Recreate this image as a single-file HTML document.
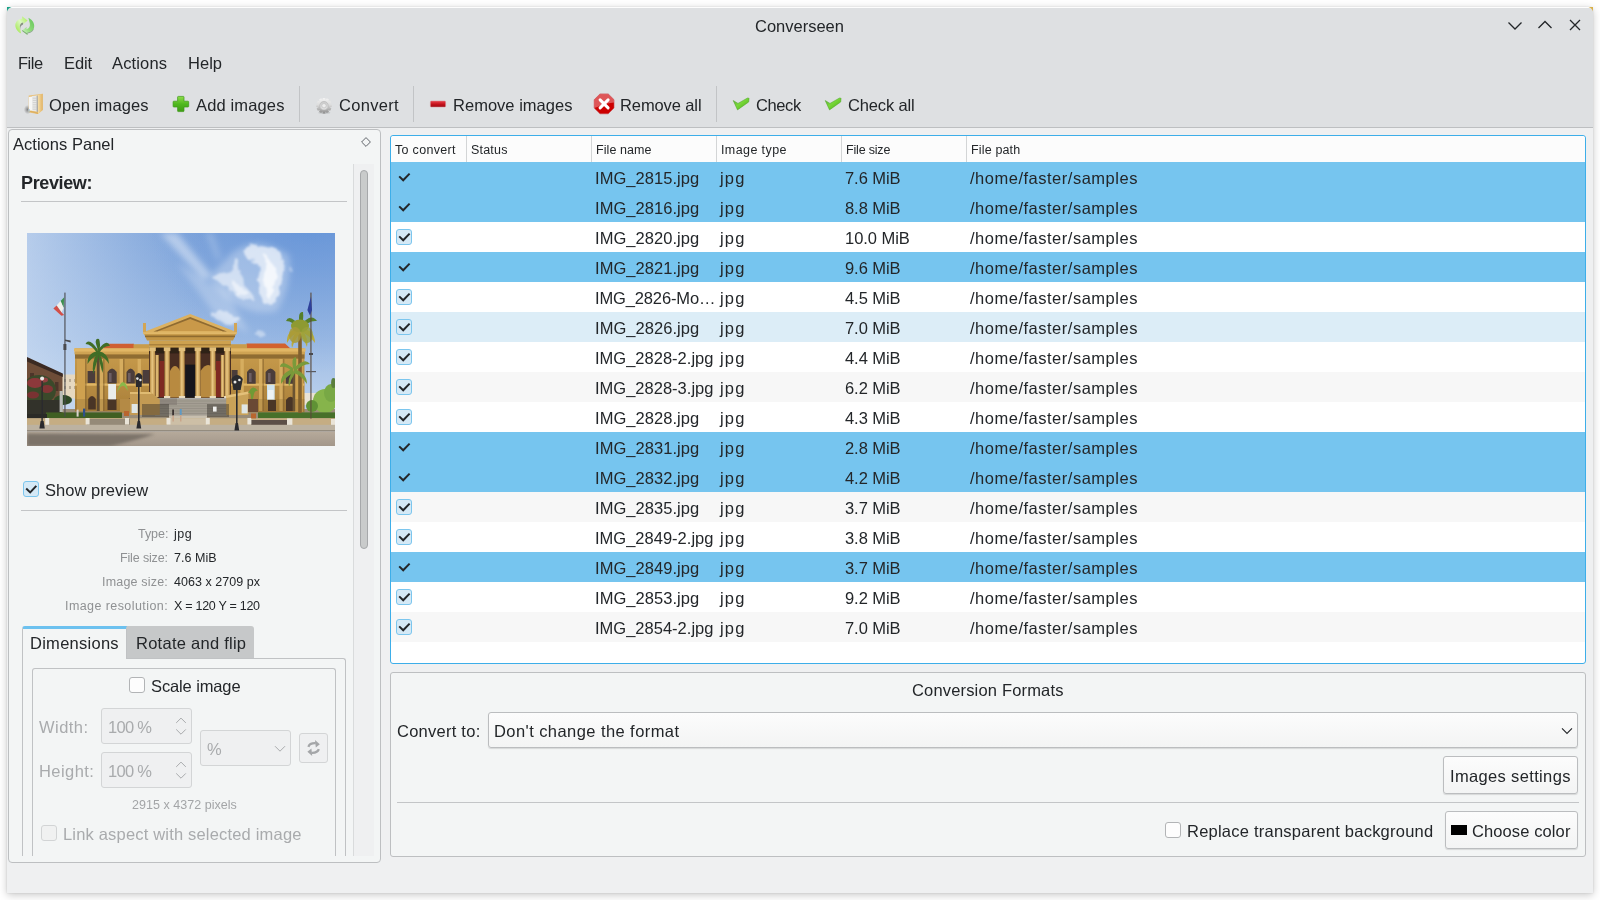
<!DOCTYPE html>
<html><head><meta charset="utf-8"><title>Converseen</title>
<style>
html,body{margin:0;padding:0;}
body{width:1600px;height:900px;overflow:hidden;background:#fff;position:relative;font-family:"Liberation Sans",sans-serif;}
.t{position:absolute;white-space:pre;will-change:transform;font-family:"Liberation Sans",sans-serif;}
#w{position:absolute;left:0;top:0;width:1600px;height:900px;}
svg{position:absolute;overflow:visible;}
.btn{box-sizing:border-box;border:1px solid #bbbdbf;border-radius:3px;background:linear-gradient(#fcfcfc,#f3f4f4);box-shadow:0 1px 1px rgba(0,0,0,0.12);}
.dis{box-sizing:border-box;border:1px solid #d3d5d6;border-radius:3px;background:#eff0f1;}
</style></head>
<body>
<div style="position:absolute;left:7px;top:7px;width:1586px;height:886px;background:#eff0f1;border-radius:4px 4px 0 0;box-shadow:0 2px 8px 0 rgba(0,0,0,0.22),0 0 2px rgba(0,0,0,0.12);"></div>
<div style="position:absolute;left:7px;top:7px;width:1586px;height:120px;background:#dee0e2;border-radius:4px 4px 0 0;border-top:1px solid #fdfdfd;box-sizing:border-box;"></div>
<div style="position:absolute;left:7px;top:127px;width:1586px;height:1px;background:#bdbfc1;"></div>
<svg style="left:7px;top:7px" width="5" height="5"><path d="M0 0H4.5Q1 1 0 4.5Z" fill="#16a085"/></svg>
<svg style="left:1588px;top:7px" width="5" height="5"><path d="M5 0H0.5Q4 1 5 4.5Z" fill="#d8b04a"/></svg>
<span class="t" style="left:755px;top:16px;font-size:16.5px;line-height:21px;color:#232629;">Converseen</span>
<svg style="left:1500px;top:12px" width="90" height="28" fill="none" stroke="#232629" stroke-width="1.3"><path d="M8.5 10.5L15 17L21.5 10.5"/><path d="M38.5 16L45 9.5L51.5 16"/><path d="M70 8L80 18M80 8L70 18"/></svg>
<span class="t" style="left:18px;top:53px;font-size:16.5px;line-height:21px;color:#232629;letter-spacing:-0.454px;">File</span>
<span class="t" style="left:64px;top:53px;font-size:16.5px;line-height:21px;color:#232629;letter-spacing:-0.079px;">Edit</span>
<span class="t" style="left:112px;top:53px;font-size:16.5px;line-height:21px;color:#232629;letter-spacing:0.146px;">Actions</span>
<span class="t" style="left:188px;top:53px;font-size:16.5px;line-height:21px;color:#232629;letter-spacing:0.021px;">Help</span>
<span class="t" style="left:49px;top:95px;font-size:16.5px;line-height:21px;color:#232629;letter-spacing:0.147px;">Open images</span>
<span class="t" style="left:196px;top:95px;font-size:16.5px;line-height:21px;color:#232629;letter-spacing:0.142px;">Add images</span>
<span class="t" style="left:339px;top:95px;font-size:16.5px;line-height:21px;color:#232629;letter-spacing:0.308px;">Convert</span>
<span class="t" style="left:453px;top:95px;font-size:16.5px;line-height:21px;color:#232629;letter-spacing:0.018px;">Remove images</span>
<span class="t" style="left:620px;top:95px;font-size:16.5px;line-height:21px;color:#232629;letter-spacing:-0.107px;">Remove all</span>
<span class="t" style="left:756px;top:95px;font-size:16.5px;line-height:21px;color:#232629;letter-spacing:-0.403px;">Check</span>
<span class="t" style="left:848px;top:95px;font-size:16.5px;line-height:21px;color:#232629;letter-spacing:-0.134px;">Check all</span>
<div style="position:absolute;left:299px;top:86px;width:1px;height:36px;background:#c2c4c6;"></div>
<div style="position:absolute;left:413px;top:86px;width:1px;height:36px;background:#c2c4c6;"></div>
<div style="position:absolute;left:716px;top:86px;width:1px;height:36px;background:#c2c4c6;"></div>
<svg style="left:14px;top:15px" width="22" height="22" viewBox="0 0 22 22">
<defs><linearGradient id="ag1" x1="1" y1="0" x2="0" y2="1"><stop offset="0" stop-color="#a5ea4a"/><stop offset="0.45" stop-color="#dcf8c4"/><stop offset="1" stop-color="#98e43a"/></linearGradient>
<linearGradient id="ag2" x1="1" y1="0" x2="0" y2="1"><stop offset="0" stop-color="#62c25a"/><stop offset="0.55" stop-color="#8fdc78"/><stop offset="1" stop-color="#e2f8d8"/></linearGradient>
<filter id="ab" x="-10%" y="-10%" width="120%" height="120%"><feGaussianBlur stdDeviation="0.3"/></filter></defs>
<g filter="url(#ab)">
<path d="M8 1.2L13.6 5.6L9 9.6L9.2 7.4C6.6 7.8 5.4 10 6 13.2L7.2 18.6C2.6 16 0.6 12 1.6 8.4C2.4 5.6 5 3.8 8.2 3.8Z" fill="url(#ag1)"/>
<path d="M9.2 7.4C6.6 7.8 5.4 10 6 13.2L6.6 15.8Q5.2 11 9 9.6Z" fill="#5f6f58" opacity="0.7"/>
<path d="M13.4 20L7.8 15.8L12.6 12L12.4 14.2C15.2 13.8 16.4 11.4 15.8 8.2L14.4 2.8C19 5.2 21 9.2 20 12.8C19.2 15.6 16.6 17.4 13.4 17.4Z" fill="url(#ag2)"/>
<path d="M13.4 20L7.8 15.8L8.6 15.2L13.2 18.4L13.4 17.4Q18.6 17 20 12.8Q19.6 17.4 13.6 18.4Z" fill="#4f7f4a" opacity="0.6"/>
</g>
</svg>
<svg style="left:24px;top:93px" width="20" height="22" viewBox="0 0 20 22">
<defs><linearGradient id="fg1" x1="0" y1="0" x2="1" y2="0"><stop offset="0" stop-color="#f7e0aa"/><stop offset="1" stop-color="#e1b263"/></linearGradient>
<radialGradient id="fsh" cx="0.5" cy="0.5" r="0.5"><stop offset="0" stop-color="#6f6f6f" stop-opacity="0.85"/><stop offset="1" stop-color="#7a7a7a" stop-opacity="0"/></radialGradient>
<filter id="fb" x="-10%" y="-10%" width="120%" height="120%"><feGaussianBlur stdDeviation="0.35"/></filter></defs>
<ellipse cx="3.6" cy="16.6" rx="3.8" ry="4.6" fill="url(#fsh)"/>
<g filter="url(#fb)">
<path d="M4.7 2.6L18.6 0.7L18.7 17L14 20.9L4.7 19.6Z" fill="#e9c27c"/>
<path d="M4.9 4L8.6 3.4V17.6L4.9 18Z" fill="#f6f6f5"/>
<path d="M8 3L13.4 2.4V18.6L8 18Z" fill="#e9e9e8"/>
<path d="M8.8 5.2H12.4M8.8 7.4H12.4M8.8 9.6H12.4M8.8 11.8H12.4M8.8 14H12.4M8.8 16.2H12.4" stroke="#c9c9c8" stroke-width="0.8"/>
<path d="M12.6 3L14 2.6V19L12.6 18.6Z" fill="#a9a9a8"/>
<path d="M13.8 2.3L18.7 0.8L18.7 17.1L14 20.9Z" fill="url(#fg1)"/>
<path d="M4.6 18.4L14 20.9L14 19.6L5.2 17.6Z" fill="#ddb060"/>
<path d="M4.6 16L5.6 16L5.6 19.6L4.6 19.4Z" fill="#9ec0dc"/>
</g>
</svg>
<svg style="left:172px;top:95px" width="18" height="18" viewBox="0 0 18 18">
<defs><linearGradient id="pg" x1="0" y1="0" x2="0" y2="1"><stop offset="0" stop-color="#8fdd4a"/><stop offset="0.5" stop-color="#4fb81e"/><stop offset="1" stop-color="#3f9d16"/></linearGradient></defs>
<path d="M6.3 1.4H11.3Q12 1.4 12 2.1V6.2H16Q16.7 6.2 16.7 6.9V11.3Q16.7 12 16 12H12V15.9Q12 16.6 11.3 16.6H6.3Q5.6 16.6 5.6 15.9V12H1.8Q1.1 12 1.1 11.3V6.9Q1.1 6.2 1.8 6.2H5.6V2.1Q5.6 1.4 6.3 1.4Z" fill="url(#pg)" stroke="#3c9a17" stroke-width="0.7"/>
</svg>
<svg style="left:315px;top:97px" width="18" height="18" viewBox="0 0 18 18">
<defs><linearGradient id="gg" gradientUnits="userSpaceOnUse" x1="0" y1="0.8" x2="0" y2="16.6"><stop offset="0" stop-color="#f4f4f4"/><stop offset="0.45" stop-color="#dcdcdc"/><stop offset="1" stop-color="#8a8a8a"/></linearGradient>
<linearGradient id="gg2" x1="0" y1="0" x2="0" y2="1"><stop offset="0" stop-color="#c9c9c9"/><stop offset="1" stop-color="#e4e4e4"/></linearGradient>
<filter id="gb" x="-10%" y="-10%" width="120%" height="120%"><feGaussianBlur stdDeviation="0.35"/></filter></defs>
<ellipse cx="9.3" cy="15.8" rx="6" ry="1.1" fill="#a9abad" opacity="0.5"/>
<g filter="url(#gb)">
<path d="M7.46 2.90L7.74 0.90L10.26 0.90L10.54 2.90L10.56 2.91L11.81 1.32L13.99 2.58L13.23 4.45L13.25 4.47L15.12 3.71L16.38 5.89L14.79 7.14L14.80 7.16L16.80 7.44L16.80 9.96L14.80 10.24L14.79 10.26L16.38 11.51L15.12 13.69L13.25 12.93L13.23 12.95L13.99 14.82L11.81 16.08L10.56 14.49L10.54 14.50L10.26 16.50L7.74 16.50L7.46 14.50L7.44 14.49L6.19 16.08L4.01 14.82L4.77 12.95L4.75 12.93L2.88 13.69L1.62 11.51L3.21 10.26L3.20 10.24L1.20 9.96L1.20 7.44L3.20 7.16L3.21 7.14L1.62 5.89L2.88 3.71L4.75 4.47L4.77 4.45L4.01 2.58L6.19 1.32L7.44 2.91Z" fill="url(#gg)"/>
<circle cx="9" cy="8.7" r="6.1" fill="url(#gg)"/>
<circle cx="9" cy="8.7" r="4.3" fill="url(#gg2)" stroke="#b4b4b4" stroke-width="0.6"/>
<circle cx="9" cy="8.7" r="2.2" fill="#ededed" stroke="#bcbcbc" stroke-width="0.6"/>
</g>
</svg>
<svg style="left:429px;top:99px" width="18" height="10" viewBox="0 0 18 10">
<defs><linearGradient id="mg" x1="0" y1="0" x2="0" y2="1"><stop offset="0" stop-color="#e8404a"/><stop offset="0.55" stop-color="#c4111b"/><stop offset="1" stop-color="#9c0d15"/></linearGradient></defs>
<rect x="1.4" y="2" width="15.2" height="6" rx="0.9" fill="url(#mg)" stroke="#d98a8e" stroke-width="0.5"/>
</svg>
<svg style="left:593px;top:93px" width="22" height="22" viewBox="0 0 22 22">
<path d="M7 0.9H15.2L21 6.7V15L15.2 20.8H7L1.2 15V6.7Z" fill="#cc0000" stroke="#c8434a" stroke-width="0.6" stroke-linejoin="round"/>
<path d="M7 0.9H15.2L21 6.7V9.4Q14 10 8 12.6Q4 14.2 1.2 15V6.7Z" fill="#e98a8e" opacity="0.62"/>
<path d="M7.1 6.9L15.1 14.9M15.1 6.9L7.1 14.9" stroke="#fff" stroke-width="3" stroke-linecap="round"/>
</svg>
<svg style="left:732px;top:97px" width="18" height="14" viewBox="0 0 18 14">
<defs><linearGradient id="cg1" x1="0" y1="0" x2="1" y2="1"><stop offset="0" stop-color="#5aa83a"/><stop offset="0.45" stop-color="#78d838"/><stop offset="1" stop-color="#4aa818"/></linearGradient></defs>
<path d="M1.2 3.5L6 6.4L15.5 1L17.1 1.3L16.7 5L5.5 12.9Z" fill="url(#cg1)" stroke="#4aa524" stroke-width="0.5" stroke-linejoin="round"/>
</svg>
<svg style="left:824px;top:97px" width="18" height="14" viewBox="0 0 18 14">
<defs><linearGradient id="cg2" x1="0" y1="0" x2="1" y2="1"><stop offset="0" stop-color="#5aa83a"/><stop offset="0.45" stop-color="#78d838"/><stop offset="1" stop-color="#4aa818"/></linearGradient></defs>
<path d="M1.2 3.5L6 6.4L15.5 1L17.1 1.3L16.7 5L5.5 12.9Z" fill="url(#cg2)" stroke="#4aa524" stroke-width="0.5" stroke-linejoin="round"/>
</svg>
<div style="position:absolute;left:8px;top:129px;width:373px;height:734px;box-sizing:border-box;border:1px solid #bdbfc1;border-radius:4px;background:#f3f5f5;"></div>
<span class="t" style="left:13px;top:134px;font-size:16.5px;line-height:21px;color:#232629;letter-spacing:0.027px;">Actions Panel</span>
<svg style="left:360px;top:136px" width="12" height="12"><path d="M6 1.6L10.4 6L6 10.4L1.6 6Z" fill="none" stroke="#60646a" stroke-width="1"/></svg>
<div style="position:absolute;left:353px;top:164px;width:21px;height:692px;background:#eff0f1;border-left:1px solid #d9dbdc;box-sizing:border-box;"></div>
<div style="position:absolute;left:360px;top:170px;width:8px;height:379px;box-sizing:border-box;background:#c9cbcb;border:1px solid #a6a8aa;border-radius:4px;"></div>
<span class="t" style="left:21px;top:172px;font-size:18px;line-height:22px;color:#232629;letter-spacing:-0.380px;font-weight:bold;">Preview:</span>
<div style="position:absolute;left:21px;top:201px;width:326px;height:1px;background:#c3c5c7;"></div>
<svg style="left:27px;top:233px" width="308" height="213" viewBox="0 0 308 213">
<defs>
<clipPath id="pc"><rect x="0" y="0" width="308" height="213"/></clipPath>
<linearGradient id="sky" x1="0" y1="0" x2="0" y2="1"><stop offset="0" stop-color="#7aa1d9"/><stop offset="0.5" stop-color="#9dbbe4"/><stop offset="0.8" stop-color="#bad0ec"/><stop offset="1" stop-color="#c6d9ef"/></linearGradient>
<linearGradient id="skyl" x1="0" y1="0" x2="1" y2="0.12"><stop offset="0" stop-color="#dbe7f6" stop-opacity="0.62"/><stop offset="0.3" stop-color="#cfdff3" stop-opacity="0.3"/><stop offset="0.6" stop-color="#b0c8ea" stop-opacity="0"/></linearGradient>
<radialGradient id="skyr" gradientUnits="userSpaceOnUse" cx="285" cy="-25" r="165"><stop offset="0" stop-color="#5c8fd8" stop-opacity="0.7"/><stop offset="0.6" stop-color="#6a98da" stop-opacity="0.28"/><stop offset="1" stop-color="#6a98da" stop-opacity="0"/></radialGradient>
<linearGradient id="och" x1="0" y1="0" x2="0" y2="1"><stop offset="0" stop-color="#c99d4c"/><stop offset="1" stop-color="#a97f3a"/></linearGradient>
<linearGradient id="col" x1="0" y1="0" x2="1" y2="0"><stop offset="0" stop-color="#b58a42"/><stop offset="0.45" stop-color="#e9c783"/><stop offset="1" stop-color="#b98d45"/></linearGradient>
<linearGradient id="road" x1="0" y1="0" x2="0" y2="1"><stop offset="0" stop-color="#b6aa9b"/><stop offset="1" stop-color="#a3978a"/></linearGradient>
<filter id="cw" x="-30%" y="-30%" width="160%" height="160%"><feTurbulence type="fractalNoise" baseFrequency="0.07" numOctaves="3" seed="7" result="n"/><feDisplacementMap in="SourceGraphic" in2="n" scale="11" xChannelSelector="R" yChannelSelector="G"/><feGaussianBlur stdDeviation="1.2"/></filter>
<filter id="b1" x="-20%" y="-20%" width="140%" height="140%"><feGaussianBlur stdDeviation="1.6"/></filter>
<filter id="b2" x="-20%" y="-20%" width="140%" height="140%"><feGaussianBlur stdDeviation="3.2"/></filter>
<filter id="b03" x="-2%" y="-2%" width="104%" height="104%"><feGaussianBlur stdDeviation="0.38"/></filter>
<filter id="b05" x="-20%" y="-20%" width="140%" height="140%"><feGaussianBlur stdDeviation="0.6"/></filter>
</defs>
<g clip-path="url(#pc)"><g filter="url(#b03)">
<rect width="308" height="213" fill="url(#sky)"/>
<rect width="308" height="213" fill="url(#skyl)"/>
<rect width="308" height="213" fill="url(#skyr)"/>
<!-- clouds -->
<g filter="url(#b2)" fill="#fff">
<path d="M133 0L150 0L186 44L176 46Z" opacity="0.42"/>
<path d="M178 0L186 0L194 26L190 27Z" opacity="0.2"/>
<path d="M150 30L200 60L222 100L190 84Z" opacity="0.25"/>
<path d="M205 20Q230 0 262 22Q266 50 250 78Q225 84 200 66Q180 50 186 40Z" opacity="0.28"/>
</g>
<g filter="url(#cw)" fill="#fff">
<path d="M214 17Q222 10 236 12Q250 16 257 28Q256 46 251 60Q245 74 238 72Q233 60 232 48Q230 32 225 24Q218 22 214 17Z" opacity="0.62"/>
<path d="M236 22Q247 28 250 44Q248 58 242 66Q237 50 236 22Z" opacity="0.7"/>
<path d="M207 27Q212 26 213 34Q214 46 221 56Q229 62 226 68Q216 72 207 62Q197 50 186 46Q190 38 198 40Q204 42 207 27Z" opacity="0.5"/>
<path d="M206 44Q214 52 222 62Q214 68 206 58Q202 50 206 44Z" opacity="0.5"/>
<path d="M184 80Q196 77 212 84Q214 90 200 90Q186 89 184 80Z" opacity="0.5"/>
<path d="M228 100Q236 96 240 102Q236 106 228 100Z" opacity="0.4"/>
<path d="M262 34Q266 32 268 37Q264 40 262 34Z" opacity="0.3"/>
</g>
<rect x="0" y="176" width="308" height="12" fill="#9a8d78"/>
<!-- far buildings left -->
<rect x="34" y="141.5" width="20" height="24" fill="#e6d8bf"/>
<g fill="#b9ab94"><rect x="37" y="146" width="2" height="3"/><rect x="42" y="146" width="2" height="3"/><rect x="47" y="146" width="2" height="3"/><rect x="37" y="153" width="2" height="3"/><rect x="42" y="153" width="2" height="3"/><rect x="47" y="153" width="2" height="3"/></g>
<!-- far buildings right -->
<rect x="276" y="160" width="22" height="12" fill="#e9e2d4"/>
<!-- left dark building -->
<path d="M0 125L35.5 141L35.5 180L0 180Z" fill="#6e4e38"/>
<path d="M0 124L35.8 140.5L35.8 144L0 128.5Z" fill="#3b2b24"/>
<g fill="#4d3629"><rect x="3" y="140" width="4" height="9"/><rect x="11" y="143" width="4" height="9"/><rect x="20" y="146" width="4" height="9"/><rect x="28" y="149" width="3.5" height="9"/></g>
<!-- red bush -->
<g filter="url(#b05)">
<ellipse cx="12" cy="157" rx="17" ry="15" fill="#3b4a2c"/>
<g opacity="0.75"><ellipse cx="8" cy="150" rx="8" ry="5" fill="#a8333f"/><ellipse cx="20" cy="156" rx="6" ry="4" fill="#9a2f3a"/><ellipse cx="6" cy="162" rx="6" ry="3.4" fill="#8e2c36"/><ellipse cx="17" cy="147" rx="4" ry="2.4" fill="#b03c48"/></g>
<ellipse cx="36" cy="167" rx="9" ry="5" fill="#2f4a28"/>
</g>
<rect x="0" y="167" width="34" height="14" fill="#33302a"/>
<!-- right trees -->
<g filter="url(#b05)">
<ellipse cx="298" cy="168" rx="12" ry="12" fill="#86b44c"/><ellipse cx="304" cy="160" rx="7" ry="9" fill="#78a844"/><ellipse cx="285" cy="173" rx="6" ry="6" fill="#5f9236"/><ellipse cx="306.5" cy="150" rx="2.4" ry="5" fill="#5a7f3c"/>
</g>
<!-- ===== building ===== -->
<!-- wing roofs -->
<path d="M79 110.8L107 110.8L107 116L76 116Z" fill="#cf5f30"/>
<path d="M219.5 110.4L258 110.4L264 116L219.5 116Z" fill="#d2622f"/>
<!-- wings -->
<rect x="48" y="115.3" width="75" height="63" fill="url(#och)"/>
<rect x="204" y="115.3" width="73.5" height="64" fill="url(#och)"/>
<rect x="106.5" y="111.2" width="16" height="6" fill="#c99c4b"/><rect x="204" y="111.2" width="16" height="6" fill="#c99c4b"/>
<!-- cornice bands -->
<rect x="47" y="115.3" width="76.5" height="3.4" fill="#e2b765"/><rect x="204" y="115.3" width="74.5" height="3.4" fill="#e2b765"/>
<rect x="48" y="121" width="75" height="4.6" fill="#8f6c30"/><rect x="204" y="121" width="73.5" height="4.6" fill="#8f6c30"/>
<rect x="47.5" y="119" width="76" height="2.4" fill="#cfa352"/><rect x="204" y="119" width="74" height="2.4" fill="#cfa352"/>
<rect x="48" y="150.5" width="75" height="2.2" fill="#e0b766"/><rect x="204" y="150.5" width="73.5" height="2.2" fill="#e0b766"/>
<!-- end pavilions (slightly projecting) -->
<rect x="50" y="126" width="8" height="52" fill="#cfa150"/><rect x="268" y="126" width="8" height="53" fill="#cfa150"/>
<g fill="#d9b062" opacity="0.9"><rect x="72.6" y="126" width="3.4" height="52"/><rect x="92.6" y="126" width="3.4" height="25"/><rect x="110.6" y="126" width="3.4" height="38"/><rect x="213.4" y="126" width="3.4" height="34"/><rect x="232" y="126" width="3.4" height="52"/><rect x="252.4" y="126" width="3.4" height="52"/></g>
<g fill="#7d5c2c" opacity="0.5"><rect x="76" y="126" width="1.6" height="52"/><rect x="96" y="126" width="1.6" height="25"/><rect x="235.4" y="126" width="1.6" height="52"/><rect x="255.8" y="126" width="1.6" height="52"/><rect x="58" y="126" width="1.6" height="52"/></g>
<rect x="48" y="166" width="75" height="12.6" fill="#8a672f" opacity="0.28"/><rect x="204" y="166" width="73.5" height="13" fill="#8a672f" opacity="0.28"/>
<!-- upper windows -->
<g fill="#4b3d3a">
<path d="M80.5 150.5V139Q85 132 89.7 139V150.5Z"/><path d="M99.5 150.5V139Q103.7 132 107.8 139V150.5Z"/>
<rect x="60.6" y="138" width="7.6" height="12"/><rect x="115.6" y="137" width="7" height="13.5"/>
<path d="M220 150.8V139Q224.3 132 228.7 139V150.8Z"/><path d="M238.6 151V139Q243.5 132 248.4 139V151Z"/>
<rect x="204.6" y="137" width="6" height="13.5"/><path d="M258.8 150.8V141Q263 135.5 267.2 141V150.8Z"/>
</g>
<g fill="#8a7a86" opacity="0.55"><rect x="82" y="140" width="2.6" height="9"/><rect x="101" y="140" width="2.6" height="9"/><rect x="222" y="140" width="2.6" height="9"/><rect x="241" y="140" width="2.6" height="9"/></g>
<!-- lower doors / banners -->
<g fill="#4a3425">
<path d="M61.2 176.5V166Q65 160 68.8 166V176.5Z"/><path d="M99.6 176.5V168Q102.5 163 105.4 168V176.5Z"/>
<path d="M259 178V167Q263.5 160.5 268 167V178Z"/><path d="M222 177V166H231V177Z"/><path d="M241 178V167H249V178Z"/>
<rect x="80.5" y="166" width="9" height="11"/>
</g>
<rect x="81.2" y="151" width="7.8" height="15.4" fill="#e9ecea"/><rect x="240" y="151.5" width="7.7" height="15.2" fill="#cfe3ee"/><rect x="241" y="157" width="5.6" height="9" fill="#eef3f4"/>
<!-- portico: interior -->
<rect x="122" y="114" width="82" height="51" fill="#4a2f22"/>
<rect x="132.6" y="128" width="4.6" height="36" fill="#7e2a22"/><rect x="189" y="128" width="4.6" height="36" fill="#7e2a22"/>
<path d="M143 164.5V138Q148 128 153 138V164.5Z" fill="#b88a3f"/><path d="M173.5 164.5V138Q181 126 189 138V164.5Z" fill="#b88a3f"/>
<rect x="158.2" y="131.6" width="10.8" height="33" fill="#17181b"/>
<rect x="122" y="114" width="82" height="6.5" fill="#2f2018"/>
<!-- entablature -->
<rect x="122.2" y="107.4" width="81.8" height="7.2" fill="#cda14f"/>
<rect x="122.2" y="111.2" width="81.8" height="1.2" fill="#a47a38"/>
<path d="M116.4 99.4H209.6L206 107.6H120Z" fill="#c29545"/>
<rect x="116.2" y="99" width="93.6" height="2.2" fill="#e1b869"/>
<rect x="118" y="102.6" width="90" height="1.6" fill="#8e6a2e"/>
<!-- pediment -->
<path d="M163.2 81L210 99.2H116.2Z" fill="#dcb160"/>
<path d="M163.2 85.6L196 98H130.4Z" fill="#c9994a"/>
<path d="M163.2 84L200 98.4L196 98.4L163.2 86L130.4 98.4L126.4 98.4Z" fill="#8e6a30"/>
<rect x="116" y="90" width="3" height="9" fill="#d2a556"/><rect x="207" y="90" width="3" height="9" fill="#d2a556"/>
<!-- columns -->
<g fill="url(#col)">
<rect x="122.9" y="118" width="5.2" height="46"/><rect x="137.5" y="118" width="5.2" height="46"/><rect x="152.4" y="118" width="5.2" height="46"/><rect x="168.3" y="118" width="5.2" height="46"/><rect x="183.2" y="118" width="5.2" height="46"/><rect x="197.6" y="118" width="5.2" height="46"/>
<rect x="128.4" y="122" width="3.4" height="42"/><rect x="193.8" y="122" width="3.4" height="42"/>
</g>
<g fill="#e2bf7a">
<rect x="122.2" y="114.3" width="6.6" height="3.8"/><rect x="136.8" y="114.3" width="6.6" height="3.8"/><rect x="151.7" y="114.3" width="6.6" height="3.8"/><rect x="167.6" y="114.3" width="6.6" height="3.8"/><rect x="182.5" y="114.3" width="6.6" height="3.8"/><rect x="196.9" y="114.3" width="6.6" height="3.8"/>
</g>
<g fill="#e9dcc0">
<rect x="122.4" y="163" width="6.2" height="2.2"/><rect x="137" y="163" width="6.2" height="2.2"/><rect x="151.9" y="163" width="6.2" height="2.2"/><rect x="167.8" y="163" width="6.2" height="2.2"/><rect x="182.7" y="163" width="6.2" height="2.2"/><rect x="197.1" y="163" width="6.2" height="2.2"/>
</g>
<!-- stairs and side walls -->
<path d="M128 165.3H200V183H128Z" fill="#a49e93"/>
<g stroke="#8b857b" stroke-width="0.5"><path d="M128 168H200M128 170.5H200M128 173H200M128 175.5H200M128 178H200M128 180.5H200"/></g>
<path d="M128 165.3L150 165.3L150 172L128 172Z" fill="#7d776f" opacity="0.55"/>
<path d="M103 159H123.2L132.8 166.3V182H103Z" fill="#c39a52"/><path d="M103 159H123.2L125 161H103Z" fill="#e0bb72"/>
<path d="M199.2 162.4L221.4 158.6V182H199.2Z" fill="#c9a258"/><path d="M199.2 162.4L221.4 158.6V161L199.2 165Z" fill="#e3c07a"/>
<rect x="93" y="166" width="10" height="14" fill="#b48a45"/>
<rect x="221" y="166" width="10" height="13" fill="#6a4a35"/>
<!-- hedge, wall, sidewalk, road -->
<rect x="19" y="179.4" width="76" height="5.6" fill="#3f5e24"/><rect x="231" y="179.4" width="77" height="5.8" fill="#47702a"/>
<rect x="0" y="181" width="20" height="4.4" fill="#2b2a25"/>
<g fill="#2f2a25" opacity="0.42"><rect x="115" y="171" width="27" height="13"/><rect x="180" y="171" width="22" height="13"/></g>
<rect x="142" y="182.6" width="38" height="3" fill="#c8bfae"/>
<rect x="0" y="185.2" width="308" height="6.8" fill="#c5ad83"/>
<rect x="60" y="186" width="43" height="6" fill="#958a78"/><rect x="224" y="187" width="38" height="5" fill="#5c5046"/>
<rect x="140" y="185.2" width="40" height="6.8" fill="#cdbfa6"/>
<g fill="#e9e4d8"><rect x="18.2" y="185" width="4" height="7"/><rect x="58.6" y="185" width="4" height="6.6"/><rect x="98" y="185" width="4" height="6.6"/><rect x="139.5" y="185" width="4" height="6.6"/><rect x="178.8" y="185" width="4" height="6.6"/><rect x="220.4" y="185" width="4" height="6.6"/><rect x="260" y="185.4" width="5.4" height="6.8"/><rect x="304" y="186" width="4" height="7"/></g>
<rect x="0" y="191.8" width="308" height="6.6" fill="#bcb2a1"/>
<rect x="0" y="197.4" width="308" height="1" fill="#7a7268"/>
<rect x="0" y="198.4" width="308" height="14.6" fill="url(#road)"/>
<path d="M0 200.4L128 201Q112 206.5 84 213H0Z" fill="#6f675f" opacity="0.8" filter="url(#b1)"/>
<!-- left palm -->
<rect x="69.8" y="118" width="2.8" height="60" fill="#5c4a30"/>
<g fill="#3f6d28" filter="url(#b05)">
<path d="M71 117Q62 104 58.5 111Q64 111 70 120Z"/><path d="M71 117Q66 104 72 106Q74 110 72 120Z"/><path d="M71 117Q80 105 83 113Q77 112 72 120Z"/><path d="M71 118Q60 120 60.5 131Q65 124 71 122Z"/><path d="M71 118Q82 120 82 131Q78 124 71 122Z"/><path d="M70 120Q64 130 66.5 141Q69 131 72 122Z"/><path d="M72 120Q78 130 75.5 140Q73 131 71 122Z"/>
</g>
<path d="M90 160Q92 150 96 149Q100 150 101 158Q97 152 95.5 153Q93 153 90 160Z" fill="#8ab84a"/>
<!-- right palms -->
<rect x="271.2" y="100" width="3.6" height="80" fill="#80602f"/>
<rect x="265.6" y="140" width="2.6" height="38" fill="#6a5230"/>
<g filter="url(#b05)">
<g fill="#557f2b"><path d="M273 93Q262 80 259 88Q266 88 272 97Z"/><path d="M273 93Q284 79 290 88Q281 87 274 97Z"/><path d="M273 93Q270 78 276 79Q277 86 274 96Z"/></g>
<g fill="#b9aa3c"><path d="M272 95Q259 97 260 110Q265 101 272 99Z"/><path d="M274 95Q288 97 288 110Q281 101 274 99Z"/><path d="M271 97Q263 106 265 115Q268 106 273 100Z"/><path d="M275 97Q282 106 280 114Q277 106 273 100Z"/></g>
<ellipse cx="273" cy="93" rx="9" ry="6.4" fill="#8e9a33"/><ellipse cx="268" cy="102" rx="6" ry="8" fill="#a89a38" opacity="0.85"/><ellipse cx="280" cy="102" rx="6" ry="8" fill="#9aa03a" opacity="0.8"/>
<g fill="#7a9a3a"><path d="M266 135Q254 126 253 134Q260 133 266 139Z"/><path d="M267 135Q278 124 283 131Q275 131 268 139Z"/><path d="M266 136Q253 140 254 151Q259 143 267 140Z"/><path d="M267 136Q280 140 280 151Q275 143 267 140Z"/><path d="M266 135Q264 124 269 124Q270 130 268 138Z"/><path d="M266 138Q260 146 262 154Q264 146 268 140Z"/></g>
</g>
<!-- flag poles, flags -->
<rect x="37.4" y="59.6" width="1.1" height="124" fill="#4a4a4e"/>
<path d="M37.2 64.2L33.6 68L36.6 75Z" fill="#3f8f50"/><path d="M33.6 68L29.6 72.4L34.6 79.6L36.6 75Z" fill="#f1efe9"/><path d="M29.6 72.4L26.4 75.4L34.4 82.8L37.2 82L34.6 79.6Z" fill="#d2504a"/>
<path d="M38 106.6L43.6 107.4L43.6 109.6L38 108Z" fill="#4a4a4e"/><rect x="36.4" y="111" width="3" height="6" fill="#4a4a4e"/>
<rect x="283.4" y="59.6" width="1.1" height="126" fill="#5a4a3a"/>
<path d="M284 63.6L280.4 77L283 82.6L285 77Z" fill="#2f3f9a"/>
<rect x="282" y="120" width="4" height="2" fill="#4a4a4e"/><rect x="279" y="138" width="10" height="1.2" fill="#5a5a5e"/>
<!-- lamps -->
<g fill="#2b2b2e">
<rect x="111" y="153" width="1.6" height="41"/><path d="M108.2 143Q111.8 137 115.4 143L114.6 154H109Z"/><path d="M109.4 195.6L110.6 188H113L114.2 195.6Z"/>
<rect x="209" y="155" width="1.6" height="41"/><path d="M204.4 146Q210 138 215.8 146L213.6 157H206.4Z"/><path d="M207.4 197.4L208.6 190H211L212.2 197.4Z"/>
<rect x="14.4" y="148" width="1.4" height="46"/><path d="M12.4 195.6L13.6 188H16.6L17.8 195.6Z"/>
</g>
<g fill="#e9e9e6"><circle cx="110.4" cy="145.6" r="1.3"/><circle cx="113.4" cy="147" r="1.2"/><circle cx="208" cy="149" r="1.5"/><circle cx="212.4" cy="147" r="1.3"/><circle cx="15.1" cy="145.6" r="2"/></g>
<!-- statue -->
<rect x="32.6" y="158" width="3.2" height="21" fill="#b9bdb8"/>
<!-- people -->
<g><rect x="145.2" y="176.5" width="1.8" height="6" fill="#3a3230"/><rect x="145.4" y="182.5" width="1.5" height="6" fill="#c9a58a"/><rect x="152.8" y="176" width="1.9" height="6" fill="#5f9ac4"/><rect x="153" y="182" width="1.5" height="6.5" fill="#c9a58a"/>
<rect x="49.6" y="176.6" width="2" height="7" fill="#d9d2cc"/><rect x="56" y="175.6" width="2.2" height="8" fill="#2f4f8a"/></g>
<!-- info boards / pots -->
<rect x="104.6" y="171" width="6" height="9" fill="#dfe6e6"/><rect x="214.6" y="171.4" width="6" height="9" fill="#dfe6e6"/><rect x="186" y="173.6" width="3.6" height="5" fill="#efefec"/>
<rect x="97" y="178" width="5" height="5" fill="#b9652f"/><rect x="224" y="180.4" width="5" height="5" fill="#b9652f"/>
<path d="M221 160Q226 150 231 158Q227 156 226 166H224Q224 158 221 160Z" fill="#6f9a35"/>
</g></g>
</svg>

<div style="position:absolute;left:23px;top:481px;width:16px;height:16px;box-sizing:border-box;border:1px solid #7cc6ee;border-radius:3px;background:#d5e9f6;"></div>
<svg style="left:23px;top:481px" width="16" height="16"><path d="M3.2 7.5L7.2 11.4L13.3 4.9" fill="none" stroke="#232629" stroke-width="2"/></svg>
<span class="t" style="left:45px;top:480px;font-size:16.5px;line-height:21px;color:#232629;letter-spacing:0.035px;">Show preview</span>
<div style="position:absolute;left:21px;top:510px;width:326px;height:1px;background:#c3c5c7;"></div>
<span class="t" style="left:138px;top:526px;font-size:12.5px;line-height:16px;color:#8f9193;letter-spacing:-0.041px;">Type:</span>
<span class="t" style="left:120px;top:550px;font-size:12.5px;line-height:16px;color:#8f9193;letter-spacing:-0.146px;">File size:</span>
<span class="t" style="left:102px;top:574px;font-size:12.5px;line-height:16px;color:#8f9193;letter-spacing:0.186px;">Image size:</span>
<span class="t" style="left:65px;top:598px;font-size:12.5px;line-height:16px;color:#8f9193;letter-spacing:0.420px;">Image resolution:</span>
<span class="t" style="left:174px;top:526px;font-size:12.5px;line-height:16px;color:#232629;letter-spacing:0.500px;">jpg</span>
<span class="t" style="left:174px;top:550px;font-size:12.5px;line-height:16px;color:#232629;letter-spacing:0.037px;">7.6 MiB</span>
<span class="t" style="left:174px;top:574px;font-size:12.5px;line-height:16px;color:#232629;letter-spacing:0.038px;">4063 x 2709 px</span>
<span class="t" style="left:174px;top:598px;font-size:12.5px;line-height:16px;color:#232629;letter-spacing:-0.277px;">X = 120 Y = 120</span>
<div style="position:absolute;left:22px;top:658px;width:324px;height:198px;box-sizing:border-box;border:1px solid #c0c2c4;border-bottom:none;border-radius:0 3px 0 0;background:#f3f5f5;"></div>
<div style="position:absolute;left:126px;top:626px;width:128px;height:33px;box-sizing:border-box;background:#c6c8c9;border-radius:0 3px 0 0;border-bottom:1px solid #c0c2c4;"></div>
<div style="position:absolute;left:22px;top:626px;width:105px;height:33px;box-sizing:border-box;background:#f3f5f5;border:1px solid #c0c2c4;border-bottom:none;border-top:3px solid #6cc1ef;border-radius:3px 0 0 0;"></div>
<span class="t" style="left:30px;top:633px;font-size:16.5px;line-height:21px;color:#232629;letter-spacing:0.268px;">Dimensions</span>
<span class="t" style="left:136px;top:633px;font-size:16.5px;line-height:21px;color:#232629;letter-spacing:0.259px;">Rotate and flip</span>
<div style="position:absolute;left:32px;top:668px;width:304px;height:188px;box-sizing:border-box;border:1px solid #c0c2c4;border-bottom:none;border-radius:3px 3px 0 0;background:#f3f5f5;"></div>
<div style="position:absolute;left:129px;top:677px;width:16px;height:16px;box-sizing:border-box;border:1px solid #b2b4b6;border-radius:3px;background:#fdfdfd;"></div>
<span class="t" style="left:151px;top:676px;font-size:16.5px;line-height:21px;color:#232629;letter-spacing:-0.121px;">Scale image</span>
<span class="t" style="left:39px;top:717px;font-size:16.5px;line-height:21px;color:#a9abad;letter-spacing:0.450px;">Width:</span>
<span class="t" style="left:39px;top:761px;font-size:16.5px;line-height:21px;color:#a9abad;letter-spacing:0.425px;">Height:</span>
<div class="dis" style="position:absolute;left:101px;top:708px;width:91px;height:36px;"></div>
<div class="dis" style="position:absolute;left:101px;top:752px;width:91px;height:36px;"></div>
<span class="t" style="left:108px;top:717px;font-size:16.5px;line-height:21px;color:#a9abad;letter-spacing:-0.703px;">100 %</span>
<span class="t" style="left:108px;top:761px;font-size:16.5px;line-height:21px;color:#a9abad;letter-spacing:-0.703px;">100 %</span>
<svg style="left:174px;top:714px" width="14" height="24" fill="none" stroke="#a9abad" stroke-width="1"><path d="M2.2 8.9L7 4.1L11.8 8.9M2.2 15.4L7 20.2L11.8 15.4"/></svg>
<svg style="left:174px;top:758px" width="14" height="24" fill="none" stroke="#a9abad" stroke-width="1"><path d="M2.2 8.9L7 4.1L11.8 8.9M2.2 15.4L7 20.2L11.8 15.4"/></svg>
<div class="dis" style="position:absolute;left:200px;top:730px;width:91px;height:36px;"></div>
<span class="t" style="left:207px;top:739px;font-size:16.5px;line-height:21px;color:#a9abad;">%</span>
<svg style="left:273px;top:744px" width="14" height="10" fill="none" stroke="#a9abad" stroke-width="1"><path d="M2 2.2L7 7.2L12 2.2"/></svg>
<div class="dis" style="position:absolute;left:299px;top:733px;width:29px;height:30px;"></div>
<svg style="left:305px;top:740px" width="17" height="16" viewBox="0 0 17 16">
<g fill="none" stroke="#a4a6a8" stroke-width="2.3"><path d="M3.4 6.8Q4.6 2.9 10.8 3.2"/><path d="M13.8 9.2Q12.6 13.1 6.4 12.8"/></g>
<g fill="#a4a6a8"><path d="M10 0L14.8 4.2L10.8 7.6Z"/><path d="M7.2 16L2.4 11.8L6.4 8.4Z"/></g>
</svg>
<span class="t" style="left:132px;top:797px;font-size:12.5px;line-height:16px;color:#a3a5a7;letter-spacing:0.032px;">2915 x 4372 pixels</span>
<div style="position:absolute;left:41px;top:825px;width:16px;height:16px;box-sizing:border-box;border:1px solid #d2d4d5;border-radius:3px;background:#f0f1f1;"></div>
<span class="t" style="left:63px;top:824px;font-size:16.5px;line-height:21px;color:#a9abad;letter-spacing:0.182px;">Link aspect with selected image</span>
<div style="position:absolute;left:390px;top:135px;width:1196px;height:529px;box-sizing:border-box;border:1px solid #3daee9;border-radius:3px;background:#fff;"></div>
<div style="position:absolute;left:391px;top:136px;width:1194px;height:26px;background:#fcfcfc;border-radius:3px 3px 0 0;"></div>
<div style="position:absolute;left:466px;top:136px;width:1px;height:26px;background:#d3d5d6;"></div>
<div style="position:absolute;left:591px;top:136px;width:1px;height:26px;background:#d3d5d6;"></div>
<div style="position:absolute;left:716px;top:136px;width:1px;height:26px;background:#d3d5d6;"></div>
<div style="position:absolute;left:841px;top:136px;width:1px;height:26px;background:#d3d5d6;"></div>
<div style="position:absolute;left:966px;top:136px;width:1px;height:26px;background:#d3d5d6;"></div>
<span class="t" style="left:395px;top:142px;font-size:12.5px;line-height:16px;color:#232629;letter-spacing:0.301px;">To convert</span>
<span class="t" style="left:471px;top:142px;font-size:12.5px;line-height:16px;color:#232629;letter-spacing:0.192px;">Status</span>
<span class="t" style="left:596px;top:142px;font-size:12.5px;line-height:16px;color:#232629;letter-spacing:0.066px;">File name</span>
<span class="t" style="left:721px;top:142px;font-size:12.5px;line-height:16px;color:#232629;letter-spacing:0.399px;">Image type</span>
<span class="t" style="left:846px;top:142px;font-size:12.5px;line-height:16px;color:#232629;letter-spacing:-0.184px;">File size</span>
<span class="t" style="left:971px;top:142px;font-size:12.5px;line-height:16px;color:#232629;letter-spacing:0.158px;">File path</span>
<div style="position:absolute;left:391px;top:162px;width:1194px;height:30px;background:#76c5ef;"></div>
<svg style="left:396px;top:169px" width="16" height="16"><path d="M3.2 7.4L7.2 11.3L13.6 4.6" fill="none" stroke="#232629" stroke-width="2"/></svg>
<span class="t" style="left:595px;top:168px;font-size:16.5px;line-height:21px;color:#232629;letter-spacing:0.052px;">IMG_2815.jpg</span>
<span class="t" style="left:720px;top:168px;font-size:16.5px;line-height:21px;color:#232629;letter-spacing:1.181px;">jpg</span>
<span class="t" style="left:845px;top:168px;font-size:16.5px;line-height:21px;color:#232629;letter-spacing:-0.056px;">7.6 MiB</span>
<span class="t" style="left:970px;top:168px;font-size:16.5px;line-height:21px;color:#232629;letter-spacing:0.508px;">/home/faster/samples</span>
<div style="position:absolute;left:391px;top:192px;width:1194px;height:30px;background:#76c5ef;"></div>
<svg style="left:396px;top:199px" width="16" height="16"><path d="M3.2 7.4L7.2 11.3L13.6 4.6" fill="none" stroke="#232629" stroke-width="2"/></svg>
<span class="t" style="left:595px;top:198px;font-size:16.5px;line-height:21px;color:#232629;letter-spacing:0.052px;">IMG_2816.jpg</span>
<span class="t" style="left:720px;top:198px;font-size:16.5px;line-height:21px;color:#232629;letter-spacing:1.181px;">jpg</span>
<span class="t" style="left:845px;top:198px;font-size:16.5px;line-height:21px;color:#232629;letter-spacing:-0.056px;">8.8 MiB</span>
<span class="t" style="left:970px;top:198px;font-size:16.5px;line-height:21px;color:#232629;letter-spacing:0.508px;">/home/faster/samples</span>
<div style="position:absolute;left:391px;top:222px;width:1194px;height:30px;background:#ffffff;"></div>
<div style="position:absolute;left:396px;top:229px;width:16px;height:16px;box-sizing:border-box;border:1px solid #7cc6ee;border-radius:3px;background:#d5e9f6;"></div>
<svg style="left:396px;top:229px" width="16" height="16"><path d="M3.2 7.4L7.2 11.3L13.6 4.6" fill="none" stroke="#232629" stroke-width="2"/></svg>
<span class="t" style="left:595px;top:228px;font-size:16.5px;line-height:21px;color:#232629;letter-spacing:0.052px;">IMG_2820.jpg</span>
<span class="t" style="left:720px;top:228px;font-size:16.5px;line-height:21px;color:#232629;letter-spacing:1.181px;">jpg</span>
<span class="t" style="left:845px;top:228px;font-size:16.5px;line-height:21px;color:#232629;letter-spacing:-0.046px;">10.0 MiB</span>
<span class="t" style="left:970px;top:228px;font-size:16.5px;line-height:21px;color:#232629;letter-spacing:0.508px;">/home/faster/samples</span>
<div style="position:absolute;left:391px;top:252px;width:1194px;height:30px;background:#76c5ef;"></div>
<svg style="left:396px;top:259px" width="16" height="16"><path d="M3.2 7.4L7.2 11.3L13.6 4.6" fill="none" stroke="#232629" stroke-width="2"/></svg>
<span class="t" style="left:595px;top:258px;font-size:16.5px;line-height:21px;color:#232629;letter-spacing:0.052px;">IMG_2821.jpg</span>
<span class="t" style="left:720px;top:258px;font-size:16.5px;line-height:21px;color:#232629;letter-spacing:1.181px;">jpg</span>
<span class="t" style="left:845px;top:258px;font-size:16.5px;line-height:21px;color:#232629;letter-spacing:-0.056px;">9.6 MiB</span>
<span class="t" style="left:970px;top:258px;font-size:16.5px;line-height:21px;color:#232629;letter-spacing:0.508px;">/home/faster/samples</span>
<div style="position:absolute;left:391px;top:282px;width:1194px;height:30px;background:#ffffff;"></div>
<div style="position:absolute;left:396px;top:289px;width:16px;height:16px;box-sizing:border-box;border:1px solid #7cc6ee;border-radius:3px;background:#d5e9f6;"></div>
<svg style="left:396px;top:289px" width="16" height="16"><path d="M3.2 7.4L7.2 11.3L13.6 4.6" fill="none" stroke="#232629" stroke-width="2"/></svg>
<span class="t" style="left:595px;top:288px;font-size:16.5px;line-height:21px;color:#232629;letter-spacing:-0.140px;">IMG_2826-Mo…</span>
<span class="t" style="left:720px;top:288px;font-size:16.5px;line-height:21px;color:#232629;letter-spacing:1.181px;">jpg</span>
<span class="t" style="left:845px;top:288px;font-size:16.5px;line-height:21px;color:#232629;letter-spacing:-0.056px;">4.5 MiB</span>
<span class="t" style="left:970px;top:288px;font-size:16.5px;line-height:21px;color:#232629;letter-spacing:0.508px;">/home/faster/samples</span>
<div style="position:absolute;left:391px;top:312px;width:1194px;height:30px;background:#dcedf7;"></div>
<div style="position:absolute;left:396px;top:319px;width:16px;height:16px;box-sizing:border-box;border:1px solid #7cc6ee;border-radius:3px;background:#d5e9f6;"></div>
<svg style="left:396px;top:319px" width="16" height="16"><path d="M3.2 7.4L7.2 11.3L13.6 4.6" fill="none" stroke="#232629" stroke-width="2"/></svg>
<span class="t" style="left:595px;top:318px;font-size:16.5px;line-height:21px;color:#232629;letter-spacing:0.052px;">IMG_2826.jpg</span>
<span class="t" style="left:720px;top:318px;font-size:16.5px;line-height:21px;color:#232629;letter-spacing:1.181px;">jpg</span>
<span class="t" style="left:845px;top:318px;font-size:16.5px;line-height:21px;color:#232629;letter-spacing:-0.056px;">7.0 MiB</span>
<span class="t" style="left:970px;top:318px;font-size:16.5px;line-height:21px;color:#232629;letter-spacing:0.508px;">/home/faster/samples</span>
<div style="position:absolute;left:391px;top:342px;width:1194px;height:30px;background:#ffffff;"></div>
<div style="position:absolute;left:396px;top:349px;width:16px;height:16px;box-sizing:border-box;border:1px solid #7cc6ee;border-radius:3px;background:#d5e9f6;"></div>
<svg style="left:396px;top:349px" width="16" height="16"><path d="M3.2 7.4L7.2 11.3L13.6 4.6" fill="none" stroke="#232629" stroke-width="2"/></svg>
<span class="t" style="left:595px;top:348px;font-size:16.5px;line-height:21px;color:#232629;letter-spacing:0.007px;">IMG_2828-2.jpg</span>
<span class="t" style="left:720px;top:348px;font-size:16.5px;line-height:21px;color:#232629;letter-spacing:1.181px;">jpg</span>
<span class="t" style="left:845px;top:348px;font-size:16.5px;line-height:21px;color:#232629;letter-spacing:-0.056px;">4.4 MiB</span>
<span class="t" style="left:970px;top:348px;font-size:16.5px;line-height:21px;color:#232629;letter-spacing:0.508px;">/home/faster/samples</span>
<div style="position:absolute;left:391px;top:372px;width:1194px;height:30px;background:#f7f7f7;"></div>
<div style="position:absolute;left:396px;top:379px;width:16px;height:16px;box-sizing:border-box;border:1px solid #7cc6ee;border-radius:3px;background:#d5e9f6;"></div>
<svg style="left:396px;top:379px" width="16" height="16"><path d="M3.2 7.4L7.2 11.3L13.6 4.6" fill="none" stroke="#232629" stroke-width="2"/></svg>
<span class="t" style="left:595px;top:378px;font-size:16.5px;line-height:21px;color:#232629;letter-spacing:0.007px;">IMG_2828-3.jpg</span>
<span class="t" style="left:720px;top:378px;font-size:16.5px;line-height:21px;color:#232629;letter-spacing:1.181px;">jpg</span>
<span class="t" style="left:845px;top:378px;font-size:16.5px;line-height:21px;color:#232629;letter-spacing:-0.056px;">6.2 MiB</span>
<span class="t" style="left:970px;top:378px;font-size:16.5px;line-height:21px;color:#232629;letter-spacing:0.508px;">/home/faster/samples</span>
<div style="position:absolute;left:391px;top:402px;width:1194px;height:30px;background:#ffffff;"></div>
<div style="position:absolute;left:396px;top:409px;width:16px;height:16px;box-sizing:border-box;border:1px solid #7cc6ee;border-radius:3px;background:#d5e9f6;"></div>
<svg style="left:396px;top:409px" width="16" height="16"><path d="M3.2 7.4L7.2 11.3L13.6 4.6" fill="none" stroke="#232629" stroke-width="2"/></svg>
<span class="t" style="left:595px;top:408px;font-size:16.5px;line-height:21px;color:#232629;letter-spacing:0.052px;">IMG_2828.jpg</span>
<span class="t" style="left:720px;top:408px;font-size:16.5px;line-height:21px;color:#232629;letter-spacing:1.181px;">jpg</span>
<span class="t" style="left:845px;top:408px;font-size:16.5px;line-height:21px;color:#232629;letter-spacing:-0.056px;">4.3 MiB</span>
<span class="t" style="left:970px;top:408px;font-size:16.5px;line-height:21px;color:#232629;letter-spacing:0.508px;">/home/faster/samples</span>
<div style="position:absolute;left:391px;top:432px;width:1194px;height:30px;background:#76c5ef;"></div>
<svg style="left:396px;top:439px" width="16" height="16"><path d="M3.2 7.4L7.2 11.3L13.6 4.6" fill="none" stroke="#232629" stroke-width="2"/></svg>
<span class="t" style="left:595px;top:438px;font-size:16.5px;line-height:21px;color:#232629;letter-spacing:0.052px;">IMG_2831.jpg</span>
<span class="t" style="left:720px;top:438px;font-size:16.5px;line-height:21px;color:#232629;letter-spacing:1.181px;">jpg</span>
<span class="t" style="left:845px;top:438px;font-size:16.5px;line-height:21px;color:#232629;letter-spacing:-0.056px;">2.8 MiB</span>
<span class="t" style="left:970px;top:438px;font-size:16.5px;line-height:21px;color:#232629;letter-spacing:0.508px;">/home/faster/samples</span>
<div style="position:absolute;left:391px;top:462px;width:1194px;height:30px;background:#76c5ef;"></div>
<svg style="left:396px;top:469px" width="16" height="16"><path d="M3.2 7.4L7.2 11.3L13.6 4.6" fill="none" stroke="#232629" stroke-width="2"/></svg>
<span class="t" style="left:595px;top:468px;font-size:16.5px;line-height:21px;color:#232629;letter-spacing:0.052px;">IMG_2832.jpg</span>
<span class="t" style="left:720px;top:468px;font-size:16.5px;line-height:21px;color:#232629;letter-spacing:1.181px;">jpg</span>
<span class="t" style="left:845px;top:468px;font-size:16.5px;line-height:21px;color:#232629;letter-spacing:-0.056px;">4.2 MiB</span>
<span class="t" style="left:970px;top:468px;font-size:16.5px;line-height:21px;color:#232629;letter-spacing:0.508px;">/home/faster/samples</span>
<div style="position:absolute;left:391px;top:492px;width:1194px;height:30px;background:#f7f7f7;"></div>
<div style="position:absolute;left:396px;top:499px;width:16px;height:16px;box-sizing:border-box;border:1px solid #7cc6ee;border-radius:3px;background:#d5e9f6;"></div>
<svg style="left:396px;top:499px" width="16" height="16"><path d="M3.2 7.4L7.2 11.3L13.6 4.6" fill="none" stroke="#232629" stroke-width="2"/></svg>
<span class="t" style="left:595px;top:498px;font-size:16.5px;line-height:21px;color:#232629;letter-spacing:0.052px;">IMG_2835.jpg</span>
<span class="t" style="left:720px;top:498px;font-size:16.5px;line-height:21px;color:#232629;letter-spacing:1.181px;">jpg</span>
<span class="t" style="left:845px;top:498px;font-size:16.5px;line-height:21px;color:#232629;letter-spacing:-0.056px;">3.7 MiB</span>
<span class="t" style="left:970px;top:498px;font-size:16.5px;line-height:21px;color:#232629;letter-spacing:0.508px;">/home/faster/samples</span>
<div style="position:absolute;left:391px;top:522px;width:1194px;height:30px;background:#ffffff;"></div>
<div style="position:absolute;left:396px;top:529px;width:16px;height:16px;box-sizing:border-box;border:1px solid #7cc6ee;border-radius:3px;background:#d5e9f6;"></div>
<svg style="left:396px;top:529px" width="16" height="16"><path d="M3.2 7.4L7.2 11.3L13.6 4.6" fill="none" stroke="#232629" stroke-width="2"/></svg>
<span class="t" style="left:595px;top:528px;font-size:16.5px;line-height:21px;color:#232629;letter-spacing:0.007px;">IMG_2849-2.jpg</span>
<span class="t" style="left:720px;top:528px;font-size:16.5px;line-height:21px;color:#232629;letter-spacing:1.181px;">jpg</span>
<span class="t" style="left:845px;top:528px;font-size:16.5px;line-height:21px;color:#232629;letter-spacing:-0.056px;">3.8 MiB</span>
<span class="t" style="left:970px;top:528px;font-size:16.5px;line-height:21px;color:#232629;letter-spacing:0.508px;">/home/faster/samples</span>
<div style="position:absolute;left:391px;top:552px;width:1194px;height:30px;background:#76c5ef;"></div>
<svg style="left:396px;top:559px" width="16" height="16"><path d="M3.2 7.4L7.2 11.3L13.6 4.6" fill="none" stroke="#232629" stroke-width="2"/></svg>
<span class="t" style="left:595px;top:558px;font-size:16.5px;line-height:21px;color:#232629;letter-spacing:0.052px;">IMG_2849.jpg</span>
<span class="t" style="left:720px;top:558px;font-size:16.5px;line-height:21px;color:#232629;letter-spacing:1.181px;">jpg</span>
<span class="t" style="left:845px;top:558px;font-size:16.5px;line-height:21px;color:#232629;letter-spacing:-0.056px;">3.7 MiB</span>
<span class="t" style="left:970px;top:558px;font-size:16.5px;line-height:21px;color:#232629;letter-spacing:0.508px;">/home/faster/samples</span>
<div style="position:absolute;left:391px;top:582px;width:1194px;height:30px;background:#ffffff;"></div>
<div style="position:absolute;left:396px;top:589px;width:16px;height:16px;box-sizing:border-box;border:1px solid #7cc6ee;border-radius:3px;background:#d5e9f6;"></div>
<svg style="left:396px;top:589px" width="16" height="16"><path d="M3.2 7.4L7.2 11.3L13.6 4.6" fill="none" stroke="#232629" stroke-width="2"/></svg>
<span class="t" style="left:595px;top:588px;font-size:16.5px;line-height:21px;color:#232629;letter-spacing:0.052px;">IMG_2853.jpg</span>
<span class="t" style="left:720px;top:588px;font-size:16.5px;line-height:21px;color:#232629;letter-spacing:1.181px;">jpg</span>
<span class="t" style="left:845px;top:588px;font-size:16.5px;line-height:21px;color:#232629;letter-spacing:-0.056px;">9.2 MiB</span>
<span class="t" style="left:970px;top:588px;font-size:16.5px;line-height:21px;color:#232629;letter-spacing:0.508px;">/home/faster/samples</span>
<div style="position:absolute;left:391px;top:612px;width:1194px;height:30px;background:#f7f7f7;"></div>
<div style="position:absolute;left:396px;top:619px;width:16px;height:16px;box-sizing:border-box;border:1px solid #7cc6ee;border-radius:3px;background:#d5e9f6;"></div>
<svg style="left:396px;top:619px" width="16" height="16"><path d="M3.2 7.4L7.2 11.3L13.6 4.6" fill="none" stroke="#232629" stroke-width="2"/></svg>
<span class="t" style="left:595px;top:618px;font-size:16.5px;line-height:21px;color:#232629;letter-spacing:0.007px;">IMG_2854-2.jpg</span>
<span class="t" style="left:720px;top:618px;font-size:16.5px;line-height:21px;color:#232629;letter-spacing:1.181px;">jpg</span>
<span class="t" style="left:845px;top:618px;font-size:16.5px;line-height:21px;color:#232629;letter-spacing:-0.056px;">7.0 MiB</span>
<span class="t" style="left:970px;top:618px;font-size:16.5px;line-height:21px;color:#232629;letter-spacing:0.508px;">/home/faster/samples</span>
<div style="position:absolute;left:390px;top:672px;width:1196px;height:185px;box-sizing:border-box;border:1px solid #bdbfc1;border-radius:3px;background:#f3f5f5;"></div>
<span class="t" style="left:912px;top:680px;font-size:16.5px;line-height:21px;color:#232629;letter-spacing:0.167px;">Conversion Formats</span>
<span class="t" style="left:397px;top:721px;font-size:16.5px;line-height:21px;color:#232629;letter-spacing:0.251px;">Convert to:</span>
<div class="btn" style="position:absolute;left:488px;top:712px;width:1090px;height:36px;"></div>
<span class="t" style="left:494px;top:721px;font-size:16.5px;line-height:21px;color:#232629;letter-spacing:0.429px;">Don&#x27;t change the format</span>
<svg style="left:1560px;top:725px" width="14" height="12" fill="none" stroke="#232629" stroke-width="1.1"><path d="M2 3.4L7 8.4L12 3.4"/></svg>
<div class="btn" style="position:absolute;left:1443px;top:756px;width:135px;height:38px;"></div>
<span class="t" style="left:1450px;top:766px;font-size:16.5px;line-height:21px;color:#232629;letter-spacing:0.346px;">Images settings</span>
<div style="position:absolute;left:397px;top:802px;width:1182px;height:1px;background:#c3c5c7;"></div>
<div style="position:absolute;left:1165px;top:822px;width:16px;height:16px;box-sizing:border-box;border:1px solid #b2b4b6;border-radius:3px;background:#fdfdfd;"></div>
<span class="t" style="left:1187px;top:821px;font-size:16.5px;line-height:21px;color:#232629;letter-spacing:0.233px;">Replace transparent background</span>
<div class="btn" style="position:absolute;left:1445px;top:811px;width:133px;height:38px;"></div>
<div style="position:absolute;left:1451px;top:825px;width:16px;height:10px;background:#000;"></div>
<span class="t" style="left:1472px;top:821px;font-size:16.5px;line-height:21px;color:#232629;letter-spacing:0.105px;">Choose color</span>
</body></html>
